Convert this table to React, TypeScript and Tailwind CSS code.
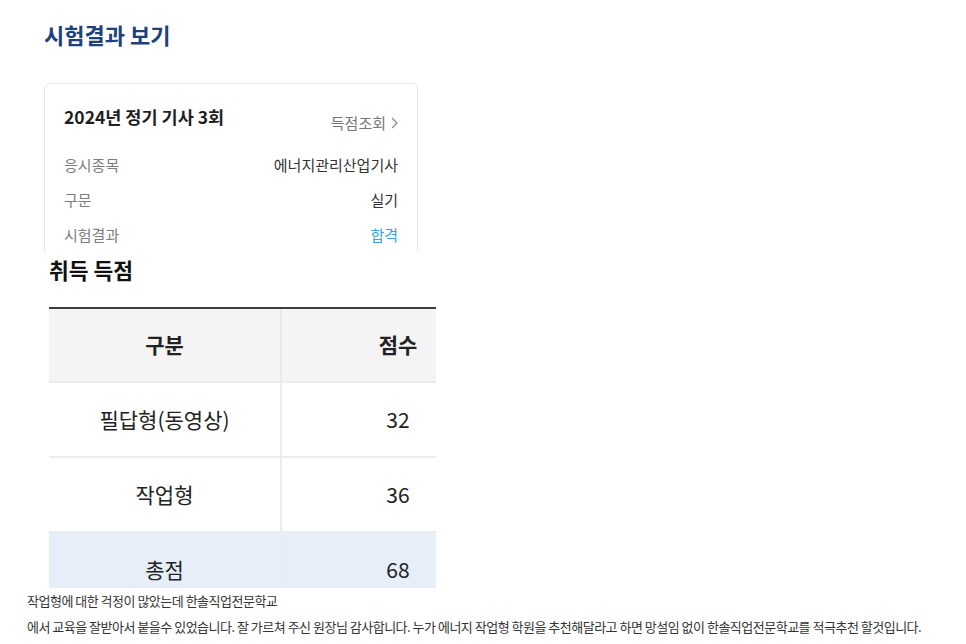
const font = "font-['Noto_Sans_CJK_KR','Noto_Sans',sans-serif]"

const infoRows = [
  { label: '응시종목', value: '에너지관리산업기사', tone: 'text-[#333]' },
  { label: '구문', value: '실기', tone: 'text-[#333]' },
  { label: '시험결과', value: '합격', tone: 'text-[#37a3da]' },
]

const scoreRows = [
  { name: '필답형(동영상)', score: '32', total: false },
  { name: '작업형', score: '36', total: false },
  { name: '총점', score: '68', total: true },
]

function ResultCard() {
  return (
    <div className="ml-[44px] mt-[35px] h-[169px] w-[374px] overflow-hidden">
      <div className="h-[220px] rounded-md border border-[#e6e6e6] px-[19px] pt-[21px]">
        <div className="flex items-start justify-between">
          <p className="text-[17.5px] font-bold leading-[24px] text-[#1f1f1f]">2024년 정기 기사 3회</p>
          <button className="mt-[8px] flex items-center gap-[5px] text-[15px] leading-[20px] text-[#777]">
            득점조회
            <svg width="7" height="12" viewBox="0 0 7 12" fill="none">
              <path d="M1 1l5 5-5 5" stroke="#888" strokeWidth="1.2" />
            </svg>
          </button>
        </div>
        <div className="mt-[15px]">
          {infoRows.map((r) => (
            <div key={r.label} className="flex h-[35px] items-center justify-between text-[15px]">
              <span className="text-[#7d7d7d]">{r.label}</span>
              <span className={r.tone}>{r.value}</span>
            </div>
          ))}
        </div>
      </div>
    </div>
  )
}

function ScoreTable() {
  return (
    <div className="ml-[49px] pt-[4px]">
      <h3 className="text-[21.5px] font-bold leading-[28px] text-[#111]">취득 득점</h3>
      <div className="mt-[23px] h-[281px] w-[387px] overflow-hidden">
        <div className="w-[465px] border-t-2 border-[#3c3c3c] text-[21px] text-[#222]">
          <div className="flex h-[72px] bg-[#f4f4f4] font-bold">
            <div className="flex w-[233px] items-center justify-center border-r-2 border-[#e9e9e9]">구분</div>
            <div className="flex flex-1 items-center justify-center">점수</div>
          </div>
          {scoreRows.map((r) => (
            <div
              key={r.name}
              className={`flex h-[75px] border-t-2 border-[#ececec] ${r.total ? 'bg-[#e5eef9]' : 'bg-white'}`}
            >
              <div className="flex w-[233px] items-center justify-center border-r-2 border-[#ececec]">{r.name}</div>
              <div className="flex flex-1 items-center justify-center">{r.score}</div>
            </div>
          ))}
        </div>
      </div>
    </div>
  )
}

export default function App() {
  return (
    <div className={`min-h-[644px] w-[966px] bg-white ${font}`}>
      <h2 className="ml-[44px] pt-[20px] text-[22px] font-bold leading-[28px] text-[#1d417d]">시험결과 보기</h2>
      <ResultCard />
      <ScoreTable />
      <div className="ml-[27px] text-[13px] leading-[26px] tracking-[-0.5px] text-[#333]">
        <p>작업형에 대한 걱정이 많았는데 한솔직업전문학교</p>
        <p>
          에서 교육을 잘받아서 붙을수 있었습니다. 잘 가르쳐 주신 원장님 감사합니다. 누가 에너지 작업형 학원을
          추천해달라고 하면 망설임 없이 한솔직업전문학교를 적극추천 할것입니다.
        </p>
      </div>
    </div>
  )
}
